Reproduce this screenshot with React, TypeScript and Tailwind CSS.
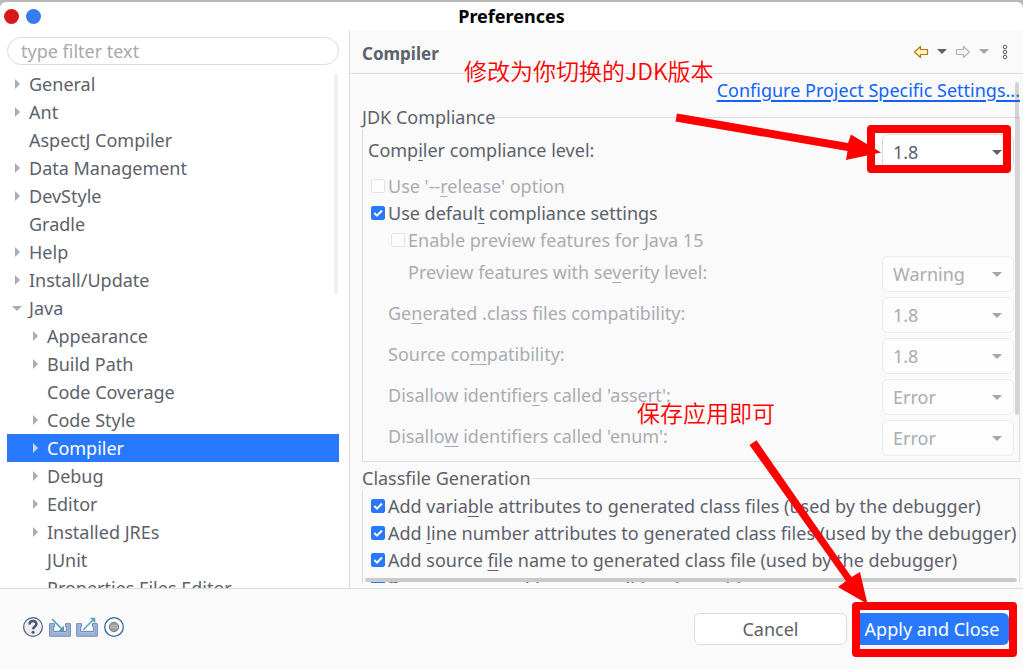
import type { ReactNode } from "react";

type TreeItem = { label: string; level: 0 | 1; state: "closed" | "open" | "leaf"; selected?: boolean };

const treeItems: TreeItem[] = [
  { label: "General", level: 0, state: "closed" },
  { label: "Ant", level: 0, state: "closed" },
  { label: "AspectJ Compiler", level: 0, state: "leaf" },
  { label: "Data Management", level: 0, state: "closed" },
  { label: "DevStyle", level: 0, state: "closed" },
  { label: "Gradle", level: 0, state: "leaf" },
  { label: "Help", level: 0, state: "closed" },
  { label: "Install/Update", level: 0, state: "closed" },
  { label: "Java", level: 0, state: "open" },
  { label: "Appearance", level: 1, state: "closed" },
  { label: "Build Path", level: 1, state: "closed" },
  { label: "Code Coverage", level: 1, state: "leaf" },
  { label: "Code Style", level: 1, state: "closed" },
  { label: "Compiler", level: 1, state: "closed", selected: true },
  { label: "Debug", level: 1, state: "closed" },
  { label: "Editor", level: 1, state: "closed" },
  { label: "Installed JREs", level: 1, state: "closed" },
  { label: "JUnit", level: 1, state: "leaf" },
  { label: "Properties Files Editor", level: 1, state: "leaf" },
];

function TreeRow({ item }: { item: TreeItem }) {
  return (
    <li
      role="treeitem"
      aria-selected={!!item.selected}
      className={`flex h-7 shrink-0 items-center gap-[7px] whitespace-nowrap ${item.level === 0 ? "pl-[5px]" : "pl-[23px]"} ${
        item.selected ? "bg-[#2979ff] text-white" : ""
      }`}
    >
      <svg viewBox="0 0 10 10" className={`size-2.5 ${item.selected ? "fill-[#c5d9ff]" : "fill-[#a9acb2]"}`} aria-hidden="true">
        {item.state === "closed" && <path d="M3 0L8 5L3 10Z" />}
        {item.state === "open" && <path d="M0 3H10L5 8Z" />}
      </svg>
      {item.label}
    </li>
  );
}

function Key({ children }: { children: ReactNode }) {
  return <span className="underline decoration-1 underline-offset-3">{children}</span>;
}

function Check({
  id,
  checked = false,
  disabled = false,
  indent = false,
  children,
}: {
  id: string;
  checked?: boolean;
  disabled?: boolean;
  indent?: boolean;
  children: ReactNode;
}) {
  return (
    <div className={`flex h-[27px] items-center gap-[3px] whitespace-nowrap ${indent ? "pl-7" : "pl-2"}`}>
      <span className="grid shrink-0">
        <input
          id={id}
          type="checkbox"
          defaultChecked={checked}
          disabled={disabled}
          className="peer col-start-1 row-start-1 size-3.5 appearance-none rounded-xs border border-[#e2e3ee] bg-[#fdfdfd] checked:border-[#2979ff] checked:bg-[#2979ff]"
        />
        <svg
          viewBox="0 0 14 14"
          className="pointer-events-none invisible col-start-1 row-start-1 size-3.5 fill-none stroke-white stroke-2 peer-checked:visible"
          aria-hidden="true"
        >
          <path d="M3.3 7L6 9.6L11 4.5" />
        </svg>
      </span>
      <label htmlFor={id} className={disabled ? "text-[#a9acb2]" : ""}>
        {children}
      </label>
    </div>
  );
}

function SelectRow({
  id,
  value,
  options,
  disabled = false,
  indent,
  children,
}: {
  id: string;
  value: string;
  options: string[];
  disabled?: boolean;
  indent: string;
  children: ReactNode;
}) {
  return (
    <div className={`flex h-9 items-start justify-between pr-[5px] ${indent}`}>
      <label htmlFor={id} className={`mt-1 ${disabled ? "text-[#a9acb2]" : ""}`}>
        {children}
      </label>
      <span className="grid w-[132px] items-center">
        <select
          id={id}
          defaultValue={value}
          disabled={disabled}
          className={`col-start-1 row-start-1 h-9 appearance-none rounded-md border pl-2.5 ${
            disabled ? "border-[#ececee] bg-[#fdfdfd] text-[#a9acb2] opacity-100" : "border-[#dcdcde] bg-white"
          }`}
        >
          {options.map((o) => (
            <option key={o}>{o}</option>
          ))}
        </select>
        <svg
          viewBox="0 0 10 5"
          className={`pointer-events-none col-start-1 row-start-1 mr-3 h-[5px] w-2.5 justify-self-end ${disabled ? "fill-[#a3a6ac]" : "fill-[#5c616c]"}`}
          aria-hidden="true"
        >
          <path d="M0 0H10L5 5Z" />
        </svg>
      </span>
    </div>
  );
}

function Caret({ className }: { className: string }) {
  return (
    <svg viewBox="0 0 10 5" className={`h-[5px] w-2.5 ${className}`} aria-hidden="true">
      <path d="M0 0H10L5 5Z" />
    </svg>
  );
}

function ViewToolbar() {
  return (
    <div className="flex items-center pr-[13px]">
      <button type="button" aria-label="Back" className="mr-2">
        <svg viewBox="0 0 16 14" className="h-3.5 w-4 fill-[#fff3c4] stroke-[#b8770b]" aria-hidden="true">
          <path d="M1.5 7L7.5 1.5V4.5H14.5V9.5H7.5V12.5Z" strokeWidth="1.2" strokeLinejoin="round" />
        </svg>
      </button>
      <button type="button" aria-label="Back history" className="mr-2">
        <Caret className="fill-[#5c616c]" />
      </button>
      <button type="button" aria-label="Forward" className="mr-2">
        <svg viewBox="0 0 16 14" className="h-3.5 w-4 fill-[#f6f6f6] stroke-[#b3b3b3]" aria-hidden="true">
          <path d="M14.5 7L8.5 1.5V4.5H1.5V9.5H8.5V12.5Z" strokeWidth="1.2" strokeLinejoin="round" />
        </svg>
      </button>
      <button type="button" aria-label="Forward history" className="mr-[11px]">
        <Caret className="fill-[#a3a6ac]" />
      </button>
      <button type="button" aria-label="View menu">
        <svg viewBox="0 0 10 16" className="h-4 w-2.5 fill-white stroke-[#5a5a5a]" aria-hidden="true">
          <circle cx="5" cy="3" r="1.8" />
          <circle cx="5" cy="8" r="1.8" />
          <circle cx="5" cy="13" r="1.8" />
        </svg>
      </button>
    </div>
  );
}

function Tray({ children }: { children: ReactNode }) {
  return (
    <svg viewBox="0 0 22 20" className="h-5 w-[22px]" aria-hidden="true">
      <path d="M.7 6.7H5.5V9.5H4.6V14.4H17.4V9.5H16.5V6.7H21.3V19.2H.7Z" fill="#a9bedf" stroke="#6683b5" />
      <path d="M2.5 8.5V17H19.5V8.5" fill="none" stroke="#8ba6d0" />
      {children}
    </svg>
  );
}

function FooterIcons() {
  return (
    <div className="flex items-center gap-[5px] pb-1">
      <button type="button" aria-label="Help">
        <svg viewBox="0 0 22 22" className="size-[22px]" aria-hidden="true">
          <circle cx="11" cy="11" r="9.4" fill="#ededf0" stroke="#51607c" strokeWidth="1.2" />
          <path d="M7.6 8.4C7.6 4 14.4 4.1 14.4 8C14.4 10.6 11.2 10.5 11.2 13.3" fill="none" stroke="#465574" strokeWidth="2.5" />
          <circle cx="11.1" cy="16.2" r="1.5" fill="#465574" />
        </svg>
      </button>
      <button type="button" aria-label="Import preferences">
        <Tray>
          <path d="M3 2L13 12" stroke="#4f97bd" strokeWidth="1.5" />
          <path d="M15 14V8.8L9.8 14Z" fill="#4f97bd" />
        </Tray>
      </button>
      <button type="button" aria-label="Export preferences">
        <Tray>
          <path d="M7 13L17 3" stroke="#5b9fc2" strokeWidth="1.5" />
          <path d="M19.3 .8V6.2L13.9 .8Z" fill="#5b9fc2" />
        </Tray>
      </button>
      <button type="button" aria-label="Record preferences">
        <svg viewBox="0 0 22 22" className="size-[22px]" aria-hidden="true">
          <circle cx="11" cy="11" r="9.3" fill="#fbfbfb" stroke="#2d6a9f" strokeWidth="1.3" />
          <circle cx="11" cy="11" r="4.7" fill="#a0a0a0" stroke="#7d7d7d" />
          <path d="M7.5 9.5H14.5M7 11.5H15" stroke="#bcbcbc" />
        </svg>
      </button>
    </div>
  );
}

function Annotations() {
  return (
    <div className="pointer-events-none absolute inset-0 text-[23px] leading-6 font-[350] whitespace-nowrap text-[#ff0000] [font-family:'Noto_Sans_CJK_SC',sans-serif]">
      <svg width="1023" height="669" viewBox="0 0 1023 669" className="absolute top-0 left-0" aria-hidden="true">
        <g fill="none" stroke="#ff0000" strokeWidth="8" strokeLinejoin="round">
          <rect x="871" y="129" width="136" height="40" />
          <rect x="856" y="606" width="157" height="47" />
        </g>
        <path fill="#ff0000" d="M677 113.5L848 143L851 134.5L881 152.5L846 160L847.5 151L675.5 121.5Z" />
        <path fill="#ff0000" d="M749.5 445L756.5 440.3L851.5 577L860 572L867.5 604L838 587L846 581Z" />
      </svg>
      <p className="absolute top-[58px] left-[464px]">修改为你切换的JDK版本</p>
      <p className="absolute top-[400px] left-[637px]">保存应用即可</p>
    </div>
  );
}

export default function App() {
  return (
    <div className="relative flex h-screen flex-col overflow-hidden bg-[#b9b9b9] pt-0.5 text-[18px] leading-6 text-[#5c616c] [font-family:'Noto_Sans',sans-serif]">
      <header className="flex h-7 shrink-0 items-center rounded-t-md bg-white px-1">
        <div className="flex flex-1 gap-[7px]">
          <button type="button" aria-label="Close" className="size-[15px] rounded-full bg-[#d61a1a]" />
          <button type="button" aria-label="Maximize" className="size-[15px] rounded-full bg-[#367cf1]" />
        </div>
        <h1 className="font-bold text-black">Preferences</h1>
        <div className="flex-1" />
      </header>

      <div className="flex min-h-0 flex-1">
        <aside className="relative flex w-[350px] shrink-0 flex-col border-r border-[#dcdcde] bg-white pt-[7px] pr-2.5 pl-[7px]">
          <input
            type="text"
            aria-label="Filter"
            placeholder="type filter text"
            className="h-7 w-full shrink-0 rounded-full border border-[#dcdcde] bg-white px-[13px] placeholder:text-[#a9a9a9]"
          />
          <ul role="tree" className="mt-[5px] flex min-h-0 flex-1 flex-col overflow-hidden">
            {treeItems.map((item) => (
              <TreeRow key={item.label} item={item} />
            ))}
          </ul>
          <div className="absolute top-[43px] right-[11px] h-[222px] w-1 rounded-full bg-[#f0f0f0]" />
        </aside>

        <main className="flex min-w-0 flex-1 flex-col bg-[#fafafa]">
          <div className="flex h-11 shrink-0 items-center justify-between border-b border-[#dcdcde] pl-3">
            <h2 className="pt-1 text-[17px] font-bold">Compiler</h2>
            <ViewToolbar />
          </div>

          <div className="relative mb-[5px] min-h-0 flex-1 overflow-hidden pt-1 pr-[3px] pl-3">
            <div className="flex justify-end">
              <a href="#project-settings" className="whitespace-nowrap text-[#1263fb] underline decoration-2 underline-offset-3">
                Configure Project Specific Settings...
              </a>
            </div>

            <fieldset className="mt-[3px] border border-[#dcdcde] pb-[5px]">
              <legend className="-ml-px pr-px">JDK Compliance</legend>
              <div className="pt-[5px]">
                <SelectRow id="level" value="1.8" options={["1.8", "11", "15"]} indent="pl-[5px]">
                  Comp<Key>i</Key>ler compliance level:
                </SelectRow>
              </div>
              <div className="pt-0.5 pb-[3px]">
                <Check id="release" disabled>
                  Use '--<Key>r</Key>elease' option
                </Check>
                <Check id="defaults" checked>
                  Use defaul<Key>t</Key> compliance settings
                </Check>
                <Check id="preview" disabled indent>
                  Enable preview features for Java 15
                </Check>
              </div>
              <div className="flex flex-col gap-[5px]">
                <SelectRow id="severity" value="Warning" options={["Warning", "Info", "Ignore"]} disabled indent="pl-[45px]">
                  Preview features with se<Key>v</Key>erity level:
                </SelectRow>
                <SelectRow id="generated" value="1.8" options={["1.8", "11", "15"]} disabled indent="pl-[25px]">
                  Ge<Key>n</Key>erated .class files compatibility:
                </SelectRow>
                <SelectRow id="source" value="1.8" options={["1.8", "11", "15"]} disabled indent="pl-[25px]">
                  Source co<Key>m</Key>patibility:
                </SelectRow>
                <SelectRow id="assert" value="Error" options={["Error", "Warning", "Ignore"]} disabled indent="pl-[25px]">
                  Disallow identifie<Key>r</Key>s called 'assert':
                </SelectRow>
                <SelectRow id="enum" value="Error" options={["Error", "Warning", "Ignore"]} disabled indent="pl-[25px]">
                  Disallo<Key>w</Key> identifiers called 'enum':
                </SelectRow>
              </div>
            </fieldset>

            <fieldset className="mt-1 border border-[#dcdcde] pt-0.5">
              <legend className="-ml-px pr-px">Classfile Generation</legend>
              <Check id="variables" checked>
                Add varia<Key>b</Key>le attributes to generated class files (used by the debugger)
              </Check>
              <Check id="lines" checked>
                Add <Key>l</Key>ine number attributes to generated class files (used by the debugger)
              </Check>
              <Check id="sources" checked>
                Add source <Key>f</Key>ile name to generated class file (used by the debugger)
              </Check>
              <Check id="locals" checked>
                Preserve unused (never read) local variables
              </Check>
            </fieldset>

            <div className="absolute top-2 right-1 h-[333px] w-1 rounded-full bg-[#5c616c]/25" />
            <div className="absolute right-1.5 bottom-px left-[15px] h-1 rounded-full bg-[#c9cacd]" />
          </div>
        </main>
      </div>

      <footer className="flex h-[81px] shrink-0 items-center justify-between border-t border-[#dcdcde] bg-[#fafafa] pr-3.5 pl-[22px]">
        <FooterIcons />
        <div className="flex gap-2">
          <button type="button" className="h-8 w-[153px] rounded-md border border-[#dcdcde] bg-white">
            Cancel
          </button>
          <button type="button" className="h-8 w-[154px] rounded-md bg-[#2979ff] text-white">
            Apply and Close
          </button>
        </div>
      </footer>

      <Annotations />
    </div>
  );
}
